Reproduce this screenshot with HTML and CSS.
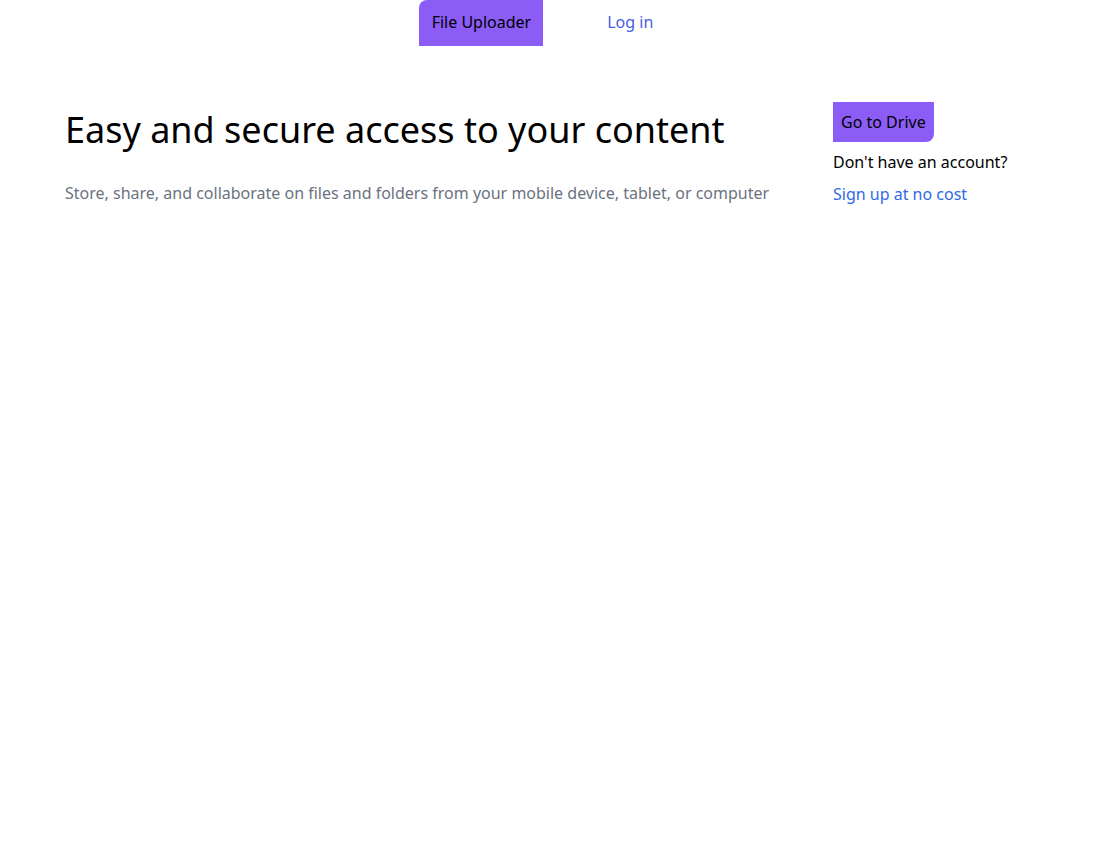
FILE: index.html
```html
<!DOCTYPE html>
<html lang="en">
<head>
<meta charset="utf-8">
<title>File Uploader</title>
<link rel="stylesheet" href="styles.css">
</head>
<body>
<nav class="nav">
  <a class="brand" href="#">File Uploader</a>
  <a class="login" href="#">Log in</a>
</nav>
<main class="hero">
  <section class="intro">
    <h1 class="title">Easy and secure access to your content</h1>
    <p class="lead">Store, share, and collaborate on files and folders from your mobile device, tablet, or computer</p>
  </section>
  <aside class="side">
    <a class="drive" href="#">Go to Drive</a>
    <p class="ask">Don't have an account?</p>
    <a class="signup" href="#">Sign up at no cost</a>
  </aside>
</main>
</body>
</html>
```

FILE: styles.css
```css
* { box-sizing: border-box; }
body {
  margin: 0;
  font-family: "Noto Sans", "Open Sans", sans-serif;
  font-size: 16px;
  line-height: 24px;
  color: #000;
  background: #fff;
}
a { text-decoration: none; }
.nav {
  display: flex;
  justify-content: center;
  align-items: center;
  gap: 64px;
}
.brand {
  background: #8b5cf6;
  color: #000;
  padding: 10px 12px 12px 13px;
  border-top-left-radius: 8px;
}
.login {
  color: #4b5ee4;
  padding-right: 29px;
  margin-top: -2px;
}
.hero {
  display: flex;
  align-items: flex-start;
  padding: 56px 65px 0;
}
.intro { flex: 1; }
.title {
  margin: 3px 0 27px;
  font-size: 36px;
  line-height: 49px;
  font-weight: 400;
}
.lead {
  margin: 0;
  color: #6b7280;
}
.side {
  width: 203px;
  display: flex;
  flex-direction: column;
  align-items: flex-start;
  gap: 8px;
}
.drive {
  background: #8b5cf6;
  color: #000;
  padding: 8px 8px;
  border-bottom-right-radius: 8px;
}
.ask { margin: 0; }
.signup { color: #2f6ae6; }
```
